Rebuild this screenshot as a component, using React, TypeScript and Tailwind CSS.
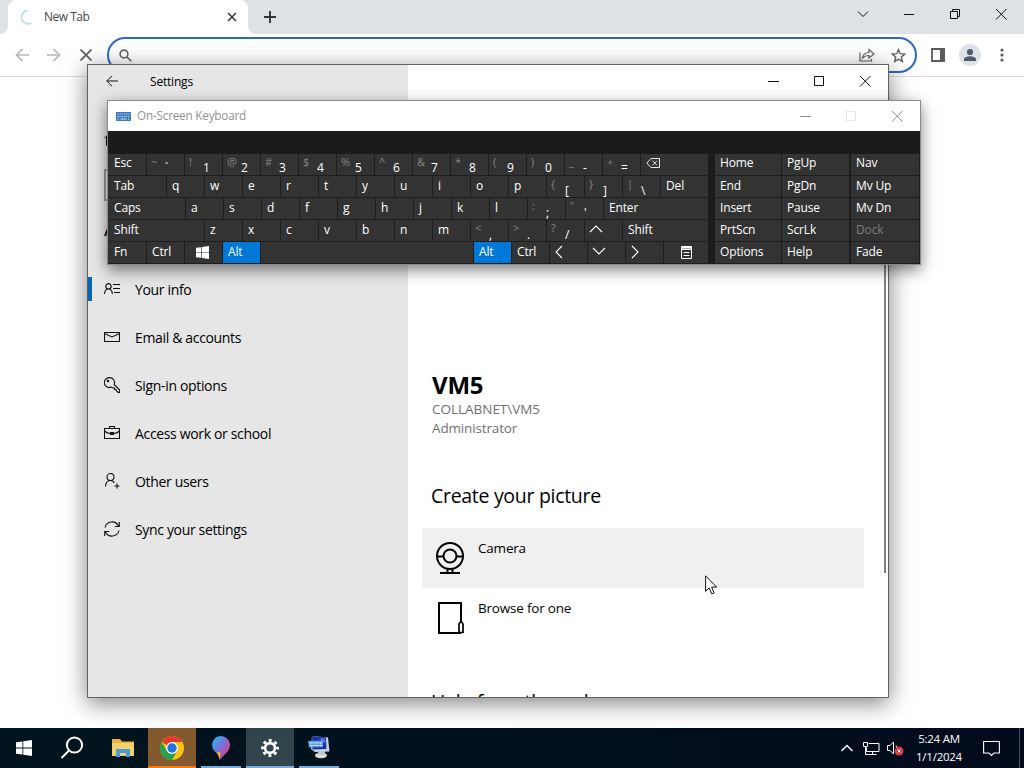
import React from 'react';

type KeyProps = {
  w?: string;
  label?: React.ReactNode;
  shift?: string;
  active?: boolean;
  dim?: boolean;
};

const Key = ({ w = 'w-[38px]', label, shift, active, dim }: KeyProps) => (
  <div
    className={`${w} shrink-0 h-[22px] flex border-r border-b border-[#1e1e1e] text-[12px] tracking-[-0.15px] whitespace-pre ${
      active ? 'bg-[#0078d7]' : 'bg-[#333333]'
    } ${dim ? 'text-[#7c7c7c]' : 'text-white'}`}
  >
    {shift ? (
      <>
        <span className="w-[14px] ml-1 text-[11px] leading-[16px] text-[#858585]">{shift}</span>
        <span className="mt-[5px]">{label}</span>
      </>
    ) : (
      <span className="ml-[5px]">{label}</span>
    )}
  </div>
);

const Letters = ({ keys }: { keys: string }) => (
  <>
    {keys.split('').map((k) => (
      <Key key={k} label={k} />
    ))}
  </>
);

const WinLogo = ({ className }: { className: string }) => (
  <svg className={className} viewBox="0 0 16 16" fill="currentColor">
    <path d="M0 2.3 6.5 1.4V7.6H0zM7.3 1.3 16 0V7.6H7.3zM0 8.4H6.5V14.6L0 13.7zM7.3 8.4H16V16L7.3 14.7z" />
  </svg>
);

const Chevron = ({ d }: { d: string }) => (
  <svg className="w-[14px] h-[14px] mt-[3px] -ml-px" viewBox="0 0 14 14" fill="none" stroke="#fff" strokeWidth="1.1">
    <path d={d} />
  </svg>
);

const Backspace = () => (
  <svg className="w-[14px] h-[12px] mt-[3px]" viewBox="0 0 14 12" fill="none" stroke="#e8e8e8" strokeWidth="1">
    <path d="M5 1.5H13.5V10.5H5L.8 6zM6.5 3.7l4.5 4.6M11 3.7 6.5 8.3" />
  </svg>
);

const MenuKey = () => (
  <svg className="w-[11px] h-[13px] mt-[4px] ml-[12px]" viewBox="0 0 11 13" fill="none" stroke="#fff">
    <path d="M.5 .5H10.5V12.5H.5zM.5 3.5H10.5M2.5 6.5H8.5M2.5 9.5H8.5" />
    <path d="M.5 1.8H10.5" strokeWidth="1.6" />
  </svg>
);

const sideKeys = [
  ['Home', 'PgUp', 'Nav'],
  ['End', 'PgDn', 'Mv Up'],
  ['Insert', 'Pause', 'Mv Dn'],
  ['PrtScn', 'ScrLk', 'Dock'],
  ['Options', 'Help', 'Fade'],
];

const numberKeys = [
  ['~', '`'], ['!', '1'], ['@', '2'], ['#', '3'], ['$', '4'], ['%', '5'], ['^', '6'],
  ['&', '7'], ['*', '8'], ['(', '9'], [')', '0'], ['_', '-'], ['+', '='],
];

const WindowButtons = ({ muted }: { muted?: boolean }) => (
  <svg className="w-[104px] h-[12px] shrink-0" viewBox="0 0 104 12" fill="none" stroke={muted ? '#8f8f8f' : '#111'}>
    <path d="M0 6.5H11" />
    <path d="M46.5 1.5H55.5V10.5H46.5z" stroke={muted ? '#e6e6e6' : '#111'} />
    <path d="M92 1 102.500 11.500M102.500 1 92 11.500" />
  </svg>
);

const Keyboard = () => (
  <div className="absolute left-[107px] top-[100px] w-[814px] h-[165px] border border-[#8a8a8a] bg-[#1b1b1b] shadow-[0_5px_14px_rgba(0,0,0,0.5)] flex flex-col">
    <div className="h-[30px] shrink-0 bg-white flex items-center pl-[8px] pr-[16px]">
      <svg className="w-[15px] h-[9px]" viewBox="0 0 15 9">
        <path d="M0 0H15V9H0z" fill="#3a76bd" />
        <path d="M1.500 2H14M1 4.500H14" stroke="#d5e5f6" strokeDasharray="1.3 .9" />
        <path d="M1.500 7H3M4.500 7H10.500M12 7H13.500" stroke="#d5e5f6" />
      </svg>
      <span className="ml-[6px] text-[11.7px] text-[#929292] tracking-[-0.18px] flex-1">On-Screen Keyboard</span>
      <WindowButtons muted />
    </div>
    <div className="h-[22px] shrink-0 mb-px" />
    <div className="flex leading-[20px]">
      <div className="w-[601px] shrink-0">
        <div className="flex leading-[18px]">
          <Key w="w-[39px] pl-px" label="Esc" />
          {numberKeys.map(([s, n]) => (
            <Key key={n} shift={s} label={n} />
          ))}
          <Key w="w-[68px]" label={<Backspace />} />
        </div>
        <div className="flex">
          <Key w="w-[59px] pl-px" label="Tab" />
          <Letters keys="qwertyuiop" />
          <Key shift="{" label="[" />
          <Key shift="}" label="]" />
          <Key shift="|" label="\" />
          <Key w="w-[48px]" label="Del" />
        </div>
        <div className="flex">
          <Key w="w-[78px] pl-px" label="Caps" />
          <Letters keys="asdfghjkl" />
          <Key shift=":" label=";" />
          <Key shift={'"'} label="'" />
          <Key w="w-[105px]" label="Enter" />
        </div>
        <div className="flex">
          <Key w="w-[97px] pl-px" label="Shift" />
          <Letters keys="zxcvbnm" />
          <Key shift="<" label="," />
          <Key shift=">" label="." />
          <Key shift="?" label="/" />
          <Key label={<Chevron d="M1 9 7 3l6 6" />} />
          <Key w="w-[86px]" label="Shift" />
        </div>
        <div className="flex">
          <Key w="w-[39px] pl-px" label="Fn" />
          <Key label="Ctrl" />
          <Key label={<WinLogo className="w-[13px] h-[13px] mt-[4px] ml-[6px]" />} />
          <Key label="Alt" active />
          <Key w="w-[213px]" />
          <Key label="Alt" active />
          <Key label="Ctrl" />
          <Key label={<Chevron d="M8 1 2 7l6 6" />} />
          <Key label={<Chevron d="M1 3l6 6 6-6" />} />
          <Key label={<Chevron d="M2 1l6 6-6 6" />} />
          <Key w="w-[45px]" label={<MenuKey />} />
        </div>
      </div>
      <div className="ml-[6px]">
        {sideKeys.map(([a, b, c], i) => (
          <div key={a} className={`flex ${i === 0 ? 'leading-[18px]' : ''}`}>
            <Key w="w-[67px]" label={a} />
            <Key w="w-[68px]" label={b} />
            <Key w="w-[70px] border-l" label={c} dim={c === 'Dock'} />
          </div>
        ))}
      </div>
    </div>
  </div>
);

const navItems = [
  {
    label: 'Your info',
    icon: <path d="M.5 13C.7 9.500 2.500 8 4.500 8s3.600 1.500 3.900 5M4.500 8a2.700 2.700 0 1 0 0-5.400 2.700 2.700 0 0 0 0 5.400zM9 3.500h7M9 7.500h7M10 11.500h6" />,
  },
  { label: 'Email & accounts', icon: <path d="M.5 3.500h15v9H.5zM.5 4.500 8 8l7.500-3.500" /> },
  {
    label: 'Sign-in options',
    icon: (
      <>
        <path d="M5.500.6a5 5 0 1 0 2 9.500L9 11h1.500v1.500H12l.5 1.500 1.500 1.400h1.500v-2.600L10.200 7.500A5 5 0 0 0 5.500.6z" />
        <circle cx="4" cy="4" r=".7" />
      </>
    ),
  },
  {
    label: 'Access work or school',
    icon: <path d="M.5 3.500h15v10H.5zM5.500 3.500v-2h5v2M.5 6c2 2 4 2.500 6 2.500h3c2 0 4-.5 6-2.500M6.500 7.500h3v2h-3z" />,
  },
  {
    label: 'Other users',
    icon: <path d="M1.500 13.500c.3-4 2-6 4.800-6 1.900 0 3.200.8 4 2.500M6.500 7.500a3.500 3.500 0 1 0 0-7 3.500 3.500 0 0 0 0 7zM13 10.500v5M10.500 13h5" />,
  },
  {
    label: 'Sync your settings',
    icon: <path d="M1 6.500a7.200 7.200 0 0 1 13.500-1.500M15.300 1v4.500h-4.500M15 9.500A7.200 7.200 0 0 1 1.500 11M.7 15v-4.500h4.500" />,
  },
];

const Settings = () => (
  <div className="absolute left-[87px] top-[64px] w-[802px] h-[634px] border border-[#606060] bg-white shadow-[0_5px_22px_rgba(0,0,0,0.5)] flex overflow-hidden text-black">
    <div className="w-[320px] shrink-0 bg-[#e6e6e6]">
      <div className="h-[33px] flex items-center">
        <svg className="w-[12px] h-[12px] ml-[18px] mb-px" viewBox="0 0 12 12" fill="none" stroke="#111">
          <path d="M12 6H.8M6 .8.8 6 6 11.200" />
        </svg>
        <span className="ml-[32px] text-[12px] tracking-[-0.2px]">Settings</span>
      </div>
      <div className="h-[71px] pt-[32px] pl-[16px]">
        <svg className="w-[16px] h-[16px]" viewBox="0 0 16 16" fill="none" stroke="#111">
          <path d="M.5 8 8 1l7.500 7M2.500 6.500v9h4v-5h3v5h4v-9" />
        </svg>
      </div>
      <div className="ml-[16px] w-[288px] h-[32px] border-2 border-[#999] bg-white" />
      <div className="h-[64px] pl-[16px] pt-[18px] text-[15px] font-semibold">Accounts</div>
      {navItems.map((item, i) => (
        <div key={item.label} className="h-[48px] flex items-center">
          <div className={`w-1 h-6 ${i === 0 ? 'bg-[#0067b8]' : ''}`} />
          <svg className="w-[16px] h-[16px] ml-[12px] mb-[1px]" viewBox="0 0 16 16" fill="none" stroke="#111" strokeWidth="1.1">
            {item.icon}
          </svg>
          <span className="ml-[15px] text-[14px] tracking-[-0.34px]">{item.label}</span>
        </div>
      ))}
    </div>
    <div className="flex-1 flex flex-col relative">
      <div className="h-[33px] shrink-0 flex items-center justify-end pr-[16px] pb-px">
        <WindowButtons />
      </div>
      <div className="pl-[24px] pt-[271px]">
        <h1 className="text-[24px] leading-[31px] font-bold tracking-[-0.2px]">VM5</h1>
        <p className="text-[13.500px] leading-[19px] text-[#707070] tracking-[-0.02px]">COLLABNET\VM5</p>
        <p className="text-[13.500px] leading-[19px] text-[#707070] tracking-[-0.150px]">Administrator</p>
        <h2 className="mt-[44px] text-[19.500px] leading-[28px] -ml-px tracking-[-0.300px]">Create your picture</h2>
      </div>
      <div className="mt-[18px] ml-[14px] w-[442px] h-[60px] shrink-0 bg-[#f0f0f0] flex pl-[13px] pt-[13px]">
        <svg className="w-[30px] h-[34px]" viewBox="0 0 30 34" fill="none" stroke="#000" strokeWidth="2">
          <circle cx="15" cy="15" r="13" />
          <circle cx="15" cy="15" r="6.500" />
          <path d="M2 15.500h6.500M21.500 15.500H28M12.500 28v3.500M17.500 28v3.500M5 32h20" />
        </svg>
        <span className="ml-[13px] -mt-px text-[13.500px] leading-4 tracking-[-0.200px]">Camera</span>
      </div>
      <div className="ml-[14px] h-[60px] shrink-0 flex pl-[13px] pt-[13px]">
        <svg className="w-[30px] h-[34px]" viewBox="0 0 30 34" fill="none" stroke="#000" strokeWidth="2">
          <path d="M26 20V2H4v30h22" />
          <path d="M24 31.500V23l2-3 2 3v8.500H24z" strokeWidth="1.700" />
        </svg>
        <span className="ml-[13px] -mt-px text-[13.500px] leading-4 tracking-[-0.200px]">Browse for one</span>
      </div>
      <h2 className="mt-[40px] ml-[23px] text-[19.500px] leading-[28px] tracking-[-0.300px]">Help from the web</h2>
      <div className="absolute right-[2px] top-[160px] w-[2px] h-[348px] bg-[#808080]" />
    </div>
  </div>
);

const Chrome = () => (
  <div className="h-[728px] bg-white text-[#45484c]">
    <div className="h-[34px] bg-[#dee1e6] flex">
      <div className="w-[8px] bg-white">
        <div className="w-[8px] h-full bg-[#dee1e6] rounded-br-[8px]" />
      </div>
      <div className="w-[240px] bg-white rounded-t-[8px] flex items-center pl-[12px] pr-[11px]">
        <svg className="w-[16px] h-[16px]" viewBox="0 0 16 16" fill="none" stroke="#c4dae4" strokeWidth="1.800">
          <path d="M7.500 1.500A6.700 6.700 0 1 0 11.500 14" />
        </svg>
        <span className="ml-[8px] flex-1 text-[12px] tracking-[-0.500px]">New Tab</span>
        <svg className="w-[10px] h-[10px]" viewBox="0 0 10 10" stroke="#333" strokeWidth="1.500">
          <path d="m1 1 8 8M9 1 1 9" />
        </svg>
      </div>
      <div className="w-[8px] bg-white">
        <div className="w-[8px] h-full bg-[#dee1e6] rounded-bl-[8px]" />
      </div>
      <svg className="w-[12px] h-[12px] mt-[11px] ml-[8px]" viewBox="0 0 12 12" stroke="#333" strokeWidth="1.900">
        <path d="M6 0v12M0 6h12" />
      </svg>
      <svg className="w-[150px] h-[12px] ml-auto mr-[17px] mt-[8px]" viewBox="0 0 150 12" fill="none" stroke="#111">
        <path d="M1 3.500 6 8.500l5-5M47 6.500h10" />
        <path d="M93.500 3.500h7v7h-7zM95.500 3.500v-2h7v7h-2" />
        <path d="m139 1 10.500 10.500M149.500 1 139 11.500" />
      </svg>
    </div>
    <div className="h-[43px] border-b border-[#dcdfe2] flex items-center">
      <svg className="w-[14px] h-[14px] ml-[15px]" viewBox="0 0 14 14" fill="none" stroke="#b4b6b9" strokeWidth="1.700">
        <path d="M14 7H1.500M7.500 1l-6 6 6 6" />
      </svg>
      <svg className="w-[14px] h-[14px] ml-[18px]" viewBox="0 0 14 14" fill="none" stroke="#b4b6b9" strokeWidth="1.700">
        <path d="M0 7h12.500M6.500 1l6 6-6 6" />
      </svg>
      <svg className="w-[12px] h-[12px] ml-[19px]" viewBox="0 0 12 12" stroke="#5a5d61" strokeWidth="1.700">
        <path d="m.5.5 11 11M11.500.5l-11 11" />
      </svg>
      <div className="ml-[15px] w-[810px] h-[36px] border-2 border-[#2b69c6] rounded-full flex items-center justify-between pl-[10px] pr-[9px]">
        <svg className="w-[13px] h-[13px]" viewBox="0 0 13 13" fill="none" stroke="#5f6368" strokeWidth="1.600">
          <circle cx="5" cy="5" r="3.900" />
          <path d="m8 8 4.300 4.300" />
        </svg>
        <div className="flex items-center gap-[16px]">
          <svg className="w-[16px] h-[14px]" viewBox="0 0 16 14" fill="none" stroke="#5f6368" strokeWidth="1.200">
            <path d="M1 4.500V13h11.500v-2M3.500 10C4 6.500 6.500 4.500 10 4.500V1.500l5 4.500-5 4V7.500C7 7.500 5 8.300 3.500 10z" />
          </svg>
          <svg className="w-[15px] h-[15px]" viewBox="0 0 15 15" fill="none" stroke="#5f6368" strokeWidth="1.400">
            <path d="m7.500 1.500 1.700 4.200 4.500.4-3.400 3 1 4.400-3.800-2.400-3.800 2.400 1-4.400-3.400-3 4.500-.4z" />
          </svg>
        </div>
      </div>
      <svg className="w-[14px] h-[14px] ml-[14px]" viewBox="0 0 14 14">
        <path d="M1 1h12v12H1z" fill="none" stroke="#5a5b5e" strokeWidth="1.800" />
        <path d="M9 0h5v14H9z" fill="#5a5b5e" />
      </svg>
      <svg className="w-[22px] h-[22px] ml-[14px]" viewBox="0 0 22 22" fill="#515a6b">
        <circle cx="11" cy="11" r="11" fill="#dee1e6" />
        <circle cx="11" cy="8" r="3.100" />
        <path d="M5 17v-1.800c0-2.100 3.800-3 6-3s6 .9 6 3V17z" />
      </svg>
      <svg className="w-[4px] h-[14px] ml-[19px]" viewBox="0 0 4 14" fill="#5a5b5e">
        <circle cx="2" cy="2" r="1.600" />
        <circle cx="2" cy="7" r="1.600" />
        <circle cx="2" cy="12" r="1.600" />
      </svg>
    </div>
  </div>
);

const Taskbar = () => (
  <div className="h-[40px] bg-linear-to-r from-[#02151e] to-[#020b1c] flex text-white">
    <div className="w-[48px] flex items-center justify-center">
      <WinLogo className="w-[16px] h-[16px]" />
    </div>
    <div className="w-[48px] flex items-center justify-center">
      <svg className="w-[24px] h-[24px]" viewBox="0 0 24 24" fill="none" stroke="#fff" strokeWidth="2">
        <circle cx="14.500" cy="9" r="7.600" />
        <path d="m9 14.500-7.500 7.500" />
      </svg>
    </div>
    <div className="w-[52px] flex items-center justify-center">
      <svg className="w-[22px] h-[20px] ml-[2px]" viewBox="0 0 22 20">
        <path d="M0 1h8l2 2.500h12V18H0z" fill="#e8b43c" />
        <path d="M0 5h22v13H0z" fill="#f3d06c" />
        <path d="M4 11h14v8h-4v-4H8v4H4z" fill="#4a9ddb" />
      </svg>
    </div>
    <div className="w-[48px] flex items-center justify-center bg-[#83592f] border-b-2 border-[#f7780c] pt-[2px]">
      <svg className="w-[24px] h-[24px]" viewBox="0 0 24 24">
        <circle cx="12" cy="12" r="12" fill="#fbc116" />
        <path d="M12 12 1.600 6A12 12 0 0 1 22.400 6H12z" fill="#e33b2e" />
        <path d="M1.600 6A12 12 0 0 0 12 24l5.200-9L12 12 6.800 15z" fill="#25a04b" />
        <circle cx="12" cy="12" r="5.900" fill="#fff" />
        <circle cx="12" cy="12" r="4.700" fill="#2374e1" />
      </svg>
    </div>
    <div className="ml-[5px] w-[40px] flex items-center justify-center border-b-2 border-[#76acd8] pt-[2px]">
      <svg className="w-[18px] h-[24px]" viewBox="0 0 18 24">
        <defs>
          <linearGradient id="pin" x1="0" y1="0" x2="1" y2="1">
            <stop offset="0" stopColor="#1ec8f0" />
            <stop offset=".4" stopColor="#6b79df" />
            <stop offset=".68" stopColor="#b94fae" />
            <stop offset="1" stopColor="#ff6b3c" />
          </linearGradient>
        </defs>
        <path d="M9 0a9 9 0 0 1 9 9c0 5-4 8-10.500 15C7 20 6 18 3 15.500A9 9 0 0 1 9 0z" fill="url(#pin)" />
        <path d="M7.500 24C7 20 6 18 4.500 16l4 .5z" fill="#ffb32a" />
      </svg>
    </div>
    <div className="ml-[5px] w-[48px] flex items-center justify-center bg-[#32454d] border-b-2 border-[#76acd8] pt-[2px]">
      <svg className="w-[18px] h-[18px]" viewBox="0 0 18 18" fill="none" stroke="#fff">
        <circle cx="9" cy="9" r="4.900" strokeWidth="2.600" />
        <circle cx="9" cy="9" r="7.400" strokeWidth="3" strokeDasharray="2.900 2.912" strokeDashoffset="1.450" />
      </svg>
    </div>
    <div className="ml-[5px] w-[40px] flex items-center justify-center border-b-2 border-[#76acd8]">
      <svg className="w-[24px] h-[24px]" viewBox="0 0 24 24">
        <path d="m5 1 16 1.500 1.500 14L8 17 4 14z" fill="#cbd3e1" />
        <path d="m5 1 14 1.500.5 11.500-14 .5z" fill="#1b32a0" />
        <path d="m12 3 6 .7.600 5.300z" fill="#5479da" />
        <path d="m1 6 15-.5V12L2 12.500z" fill="#5aa2e4" />
        <path d="M3 8h12M3 10.500h12" stroke="#e9f3ff" strokeWidth="1.100" strokeDasharray="1.700 .8" />
        <ellipse cx="14" cy="20.500" rx="6" ry="2.700" fill="#dedede" />
        <path d="M11 16h7v4h-7z" fill="#c3c7d0" />
      </svg>
    </div>
    <div className="ml-auto flex items-center">
      <svg className="w-[12px] h-[8px]" viewBox="0 0 12 8" fill="none" stroke="#fff" strokeWidth="1.400">
        <path d="m.5 7 5.500-5.500L11.500 7" />
      </svg>
      <svg className="w-[17px] h-[15px] ml-[10px]" viewBox="0 0 17 15" fill="none" stroke="#fff">
        <path d="M5.500 2.500h10.500v8H3.500v-4M9.500 10.500v3M5.500 13.500h8M.5 1.500h4v4h-4zM2.500 5.500v8h3" />
      </svg>
      <svg className="w-[17px] h-[16px] ml-[7px]" viewBox="0 0 17 16" fill="none" stroke="#fff">
        <path d="M.5 5.500H3L6.500 2v12L3 10.500H.5zM9 5.500c.7 1 .7 2 .5 3" />
        <circle cx="12" cy="11" r="4.500" fill="#d23b47" stroke="none" />
        <path d="m10.500 9.500 3 3M13.500 9.500l-3 3" />
      </svg>
      <div className="-ml-px w-[72px] text-center text-[11.500px] leading-[18px] tracking-[-0.250px]">
        <div>5:24 AM</div>
        <div>1/1/2024</div>
      </div>
      <svg className="w-[17px] h-[17px] ml-[8px]" viewBox="0 0 17 17" fill="none" stroke="#fff" strokeWidth="1.100">
        <path d="M.6 1.500h15.800v11.500H11L8.500 15.500 6 13H.6z" />
      </svg>
      <div className="ml-[19px] mr-[4px] w-px h-[40px] bg-[#4a5361]" />
    </div>
  </div>
);

const App = () => {
  return (
    <div className="relative w-[1024px] h-[768px] overflow-hidden font-['Open_Sans','Noto_Sans',sans-serif]">
      <Chrome />
      <Taskbar />
      <Settings />
      <Keyboard />
      <svg className="absolute left-[705px] top-[575px] w-[13px] h-[20px]" viewBox="0 0 13 20">
        <path d="M.6.8v15.500l3.600-3.400 2.500 6 2.400-1-2.500-5.800h5z" fill="#fff" stroke="#111" />
      </svg>
    </div>
  );
};

export default App;
